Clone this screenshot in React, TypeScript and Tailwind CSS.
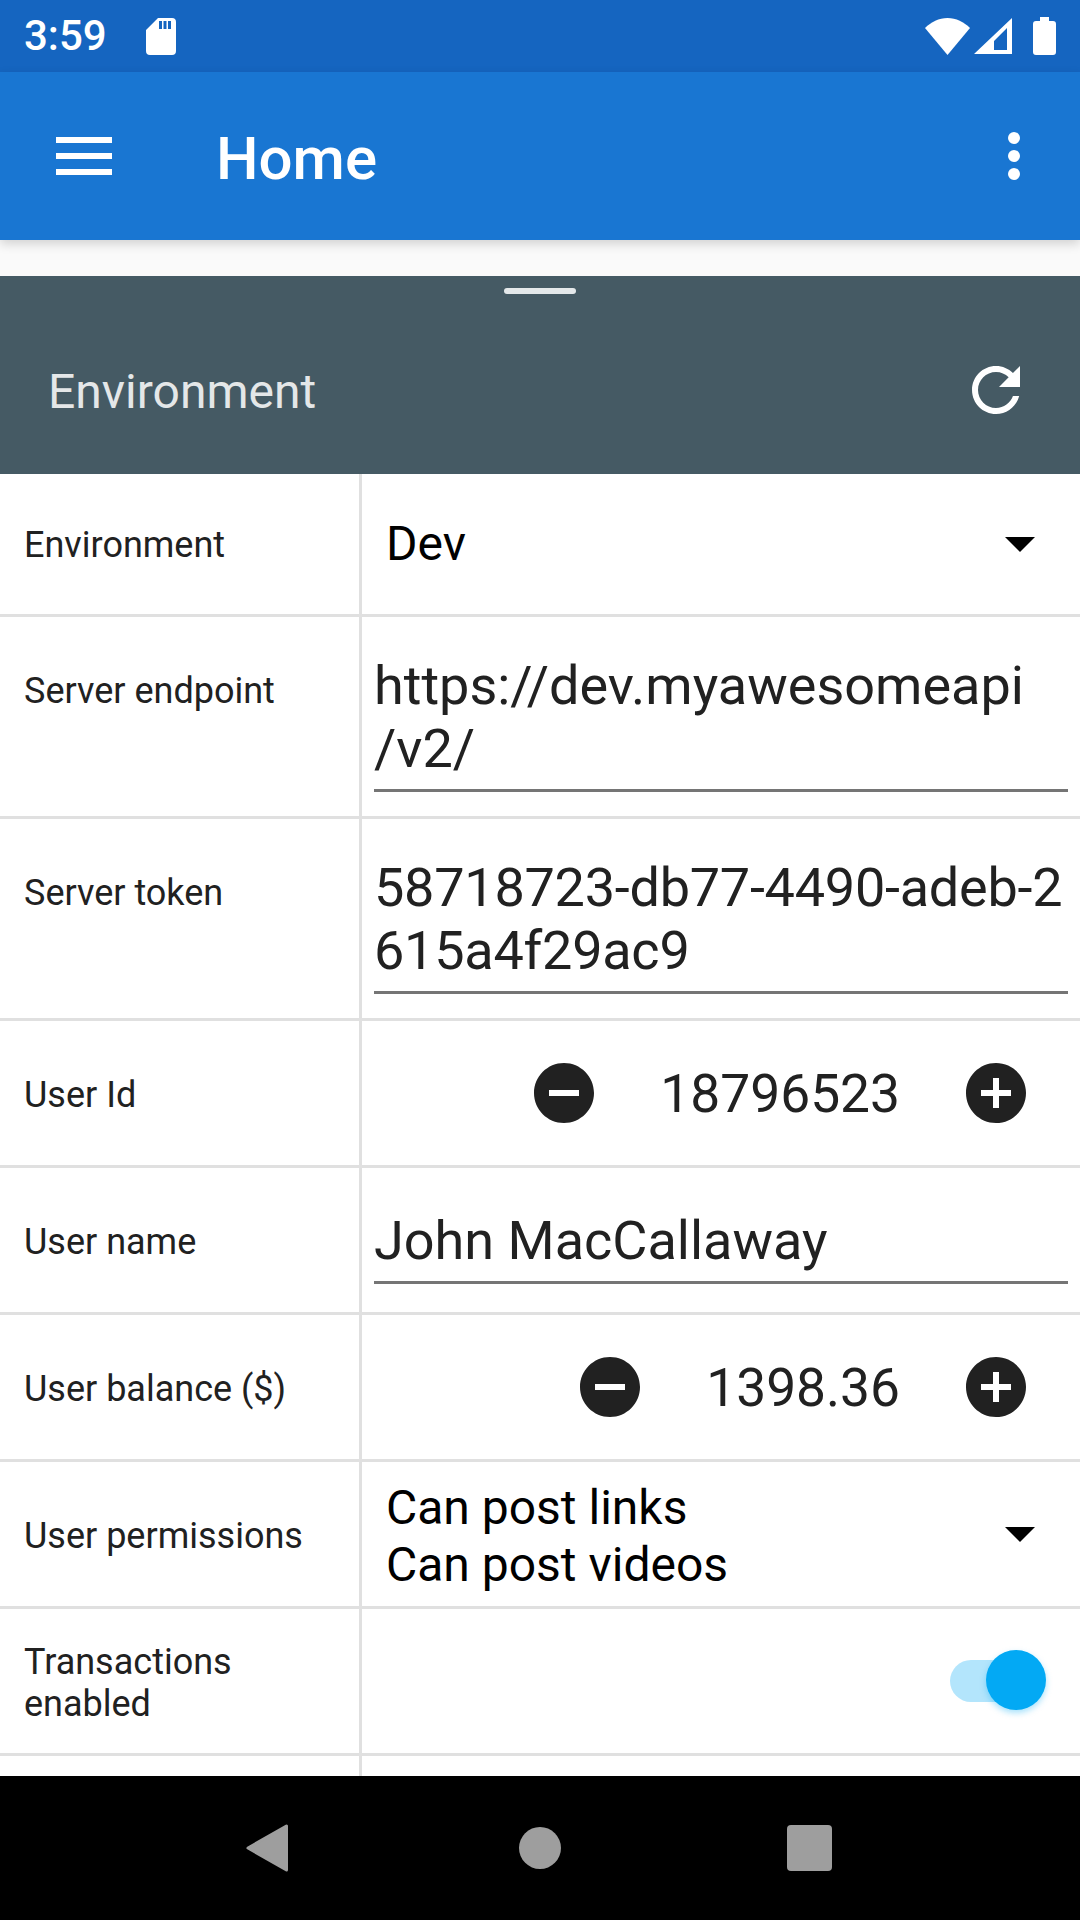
import { ReactNode } from "react";

function Row({ label, className, labelClass = "pt-[4px]", children }: { label: ReactNode; className: string; labelClass?: string; children: ReactNode }) {
  return (
    <div className={`flex shrink-0 border-b-[3px] border-[#e0e0e0] ${className}`}>
      <div className={`flex w-[362px] shrink-0 items-center border-r-[3px] border-[#e0e0e0] pl-[24px] text-[36px] leading-[42px] text-[#212121] ${labelClass}`}>
        <div>{label}</div>
      </div>
      <div className="min-w-0 flex-1">{children}</div>
    </div>
  );
}

function Arrow() {
  return (
    <svg width="30" height="15" viewBox="0 0 30 15" className="shrink-0">
      <path d="M0 0H30L15 15Z" fill="#000" />
    </svg>
  );
}

function Stepper({ value }: { value: string }) {
  return (
    <div className="flex h-full items-center justify-end gap-[60px] pr-[48px] text-[#212121]">
      <svg width="72" height="72" viewBox="0 0 24 24" className="shrink-0">
        <path fill="#212121" d="M12 2C6.48 2 2 6.48 2 12s4.48 10 10 10 10-4.48 10-10S17.52 2 12 2zm5 11H7v-2h10v2z" />
      </svg>
      <span className="pt-[4px] text-[53.3px]">{value}</span>
      <svg width="72" height="72" viewBox="0 0 24 24" className="shrink-0">
        <path fill="#212121" d="M12 2C6.48 2 2 6.48 2 12s4.48 10 10 10 10-4.48 10-10S17.52 2 12 2zm5 11h-4v4h-2v-4H7v-2h4V7h2v4h4v2z" />
      </svg>
    </div>
  );
}

function TextInput({ lines, className, textClass = "" }: { lines: string[]; className: string; textClass?: string }) {
  return (
    <div className={`flex h-full flex-col justify-end pl-[12px] pr-[12px] ${className}`}>
      <div className={`border-b-[3px] border-[#757575] pb-[9px] text-[54px] leading-[63px] text-[#212121] ${textClass}`}>
        {lines.map((l) => (
          <div key={l} className="whitespace-nowrap">{l}</div>
        ))}
      </div>
    </div>
  );
}

export default function App() {
  return (
    <div className="flex h-[1920px] w-[1080px] flex-col overflow-hidden bg-white font-['Roboto',sans-serif]">
      {/* Status bar */}
      <div className="flex h-[72px] shrink-0 items-center bg-[#1565c0] pl-[24px] pr-[24px] text-white">
        <span className="text-[42px] font-medium leading-none">3:59</span>
        <svg width="30" height="37" viewBox="0 0 30 37" className="ml-[39px]">
          <path
            fill="#fff"
            fillRule="evenodd"
            d="M12 0H26a4 4 0 0 1 4 4V33a4 4 0 0 1-4 4H4a4 4 0 0 1-4-4V12ZM13 3v8h3V3Zm4.5 0v8h3V3Zm4.5 0v8h3V3Z"
          />
        </svg>
        <div className="ml-auto flex items-center">
          <svg width="45" height="37" viewBox="0 0 45 37">
            <path fill="#fff" d="M22.5 37L0 10C6 4 14 0 22.5 0S39 4 45 10Z" />
          </svg>
          <svg width="38" height="36" viewBox="0 0 38 36" className="ml-[4px]">
            <path fill="#fff" fillRule="evenodd" d="M0 36L38 0V36ZM20 23V32H33V10Z" />
          </svg>
          <svg width="23" height="38" viewBox="0 0 23 38" className="ml-[21px]">
            <path fill="#fff" d="M7 0H16V4H20a3 3 0 0 1 3 3V35a3 3 0 0 1-3 3H3a3 3 0 0 1-3-3V7a3 3 0 0 1 3-3H7Z" />
          </svg>
        </div>
      </div>

      {/* App bar */}
      <div className="relative z-10 flex h-[168px] shrink-0 items-center bg-[#1976d2] text-white shadow-[0_4px_10px_rgba(0,0,0,0.16)]">
        <div className="ml-[56px] flex w-[56px] flex-col gap-[10px]">
          <div className="h-[6px] bg-white" />
          <div className="h-[6px] bg-white" />
          <div className="h-[6px] bg-white" />
        </div>
        <span className="ml-[104px] pt-[5px] text-[60px] font-medium leading-none">Home</span>
        <div className="ml-auto mr-[60px] flex flex-col gap-[6px]">
          <div className="h-[12px] w-[12px] rounded-full bg-white" />
          <div className="h-[12px] w-[12px] rounded-full bg-white" />
          <div className="h-[12px] w-[12px] rounded-full bg-white" />
        </div>
      </div>

      <div className="h-[36px] shrink-0 bg-[#fafafa]" />

      {/* Panel header */}
      <div className="flex h-[198px] shrink-0 flex-col bg-[#455a64] pt-[12px]">
        <div className="mx-auto h-[6px] w-[72px] rounded-full bg-[#e4e8ea]" />
        <div className="flex flex-1 items-center justify-between pl-[48px] pr-[48px] pt-[12px]">
          <span className="pt-[3px] text-[48px] text-[#e4e7e8]">Environment</span>
          <svg width="72" height="72" viewBox="0 0 24 24">
            <path
              fill="#fff"
              d="M17.65 6.35C16.2 4.9 14.21 4 12 4c-4.42 0-7.99 3.58-7.99 8s3.57 8 7.99 8c3.73 0 6.84-2.55 7.73-6h-2.08c-.82 2.33-3.04 4-5.65 4-3.31 0-6-2.69-6-6s2.69-6 6-6c1.66 0 3.14.69 4.22 1.78L13 11h7V4l-2.35 2.35z"
            />
          </svg>
        </div>
      </div>

      {/* Rows */}
      <div className="flex min-h-0 flex-1 flex-col overflow-hidden">
        <Row label="Environment" labelClass="pt-[2px]" className="h-[143px]">
          <div className="flex h-full items-center justify-between pl-[24px] pr-[45px] text-[48px] text-black">
            <span>Dev</span>
            <Arrow />
          </div>
        </Row>
        <Row label="Server endpoint" labelClass="pb-[52px]" className="h-[202px]">
          <TextInput lines={["https://dev.myawesomeapi", "/v2/"]} className="pb-[24px]" />
        </Row>
        <Row label="Server token" labelClass="pb-[52px]" className="h-[202px]">
          <TextInput lines={["58718723-db77-4490-adeb-2", "615a4f29ac9"]} className="pb-[24px]" textClass="tracking-[-0.25px]" />
        </Row>
        <Row label="User Id" className="h-[147px]">
          <Stepper value="18796523" />
        </Row>
        <Row label="User name" className="h-[147px]">
          <TextInput lines={["John MacCallaway"]} className="pb-[28px]" />
        </Row>
        <Row label="User balance ($)" className="h-[147px]">
          <Stepper value="1398.36" />
        </Row>
        <Row label="User permissions" className="h-[147px]">
          <div className="flex h-full items-center justify-between pl-[24px] pr-[45px] text-[48px] leading-[57px] text-black">
            <div className="pt-[4px]">
              <div>Can post links</div>
              <div>Can post videos</div>
            </div>
            <Arrow />
          </div>
        </Row>
        <Row label={<>Transactions<br />enabled</>} className="h-[147px]">
          <div className="flex h-full items-center justify-end pr-[41px]">
            <div className="relative h-[42px] w-[89px] rounded-full bg-[#b3e5fc]">
              <div className="absolute -top-[10px] right-[-7px] h-[60px] w-[60px] rounded-full bg-[#03a9f4] shadow-[0_3px_6px_rgba(3,169,244,0.35)]" />
            </div>
          </div>
        </Row>
        <div className="flex flex-1">
          <div className="w-[362px] border-r-[3px] border-[#e0e0e0]" />
        </div>
      </div>

      {/* Navigation bar */}
      <div className="flex h-[144px] shrink-0 items-center justify-center gap-[200px] bg-black">
        <svg width="72" height="72" viewBox="0 0 72 72">
          <path d="M54.5 14V58L16 36Z" fill="#9e9e9e" stroke="#9e9e9e" strokeWidth="3" strokeLinejoin="round" />
        </svg>
        <svg width="72" height="72" viewBox="0 0 72 72">
          <circle cx="36" cy="36" r="21" fill="#9e9e9e" />
        </svg>
        <svg width="72" height="72" viewBox="0 0 72 72">
          <rect x="11" y="13" width="45" height="46" rx="4" fill="#9e9e9e" />
        </svg>
      </div>
    </div>
  );
}
